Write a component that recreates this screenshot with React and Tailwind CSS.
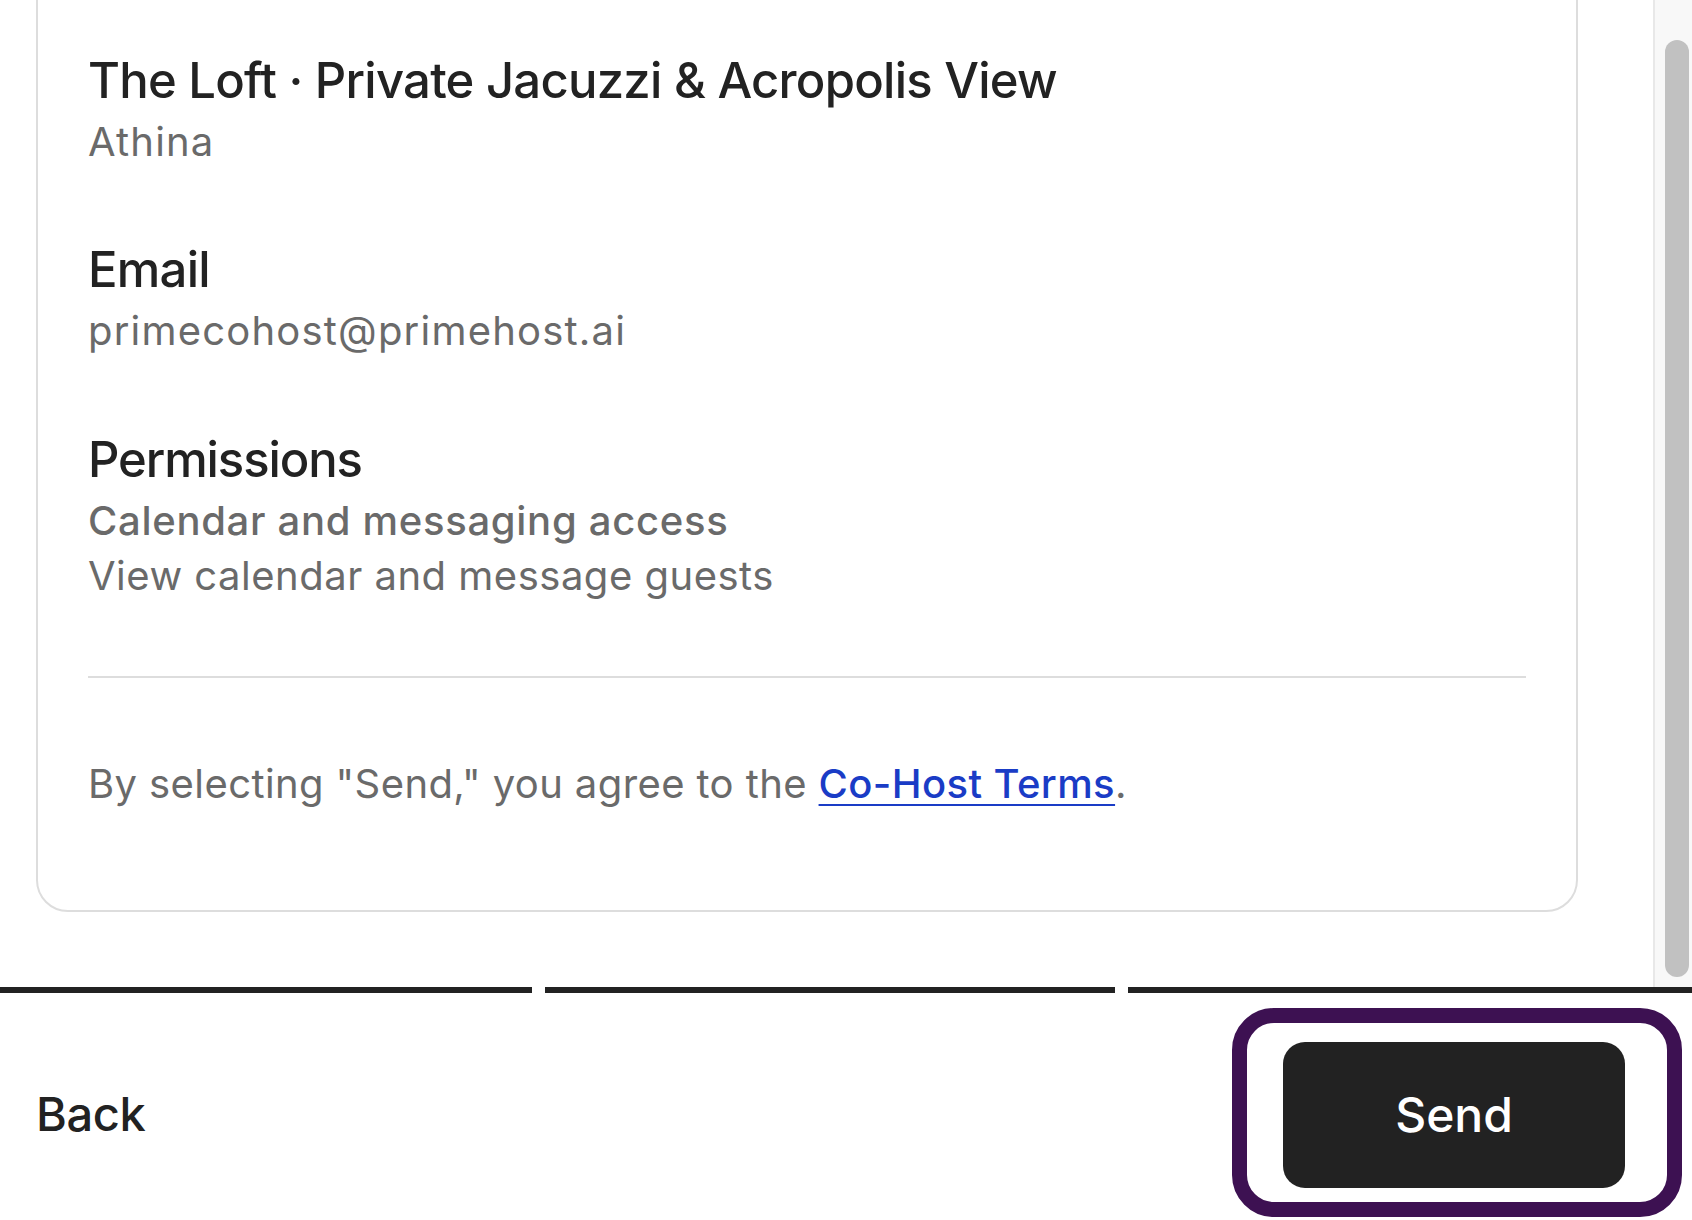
import React from "react";

export default function App() {
  return (
    <div className="w-[1692px] h-[1220px] overflow-hidden bg-white flex flex-col font-[Inter,sans-serif] text-[#222222]">
      {/* Scrollable region */}
      <div className="h-[987px] flex flex-row overflow-hidden">
        <div className="flex-1 pl-[36px] pr-[75px]">
          <div className="mt-[-60px] border-2 border-[#dddddd] rounded-[32px] pt-[110px] pb-[99px] px-[50px]">
            <div className="text-[49px] leading-[58px] font-medium tracking-[-0.75px]">
              The Loft · Private Jacuzzi &amp; Acropolis View
            </div>
            <div className="mt-[3px] text-[40px] leading-[58px] tracking-[1.2px] text-[#6a6a6a]">Athina</div>

            <div className="mt-[70px] text-[49px] leading-[58px] font-medium tracking-[-0.75px]">Email</div>
            <div className="mt-[3px] text-[40px] leading-[58px] tracking-[1.2px] text-[#6a6a6a]">
              primecohost@primehost.ai
            </div>

            <div className="mt-[71px] text-[49px] leading-[58px] font-medium tracking-[-1.1px]">Permissions</div>
            <div className="mt-[4px] text-[40px] leading-[55px] font-medium tracking-[0.7px] text-[#6a6a6a]">
              Calendar and messaging access
            </div>
            <div className="text-[40px] leading-[55px] tracking-[0.5px] text-[#6a6a6a]">
              View calendar and message guests
            </div>

            <div className="mt-[73px] h-[2px] bg-[#dddddd]" />

            <div className="mt-[78px] text-[40px] leading-[55px] tracking-[0.4px] text-[#6a6a6a]">
              By selecting "Send," you agree to the{" "}
              <a className="text-[#1a3cc6] font-medium underline decoration-[2px] underline-offset-[6px]">
                Co-Host Terms
              </a>
              .
            </div>
          </div>
        </div>
        {/* Scrollbar */}
        <div className="w-[39px] h-full bg-[#f8f8f8] border-l-2 border-[#e8e8e8] pl-[10px] pr-[3px] pt-[40px] pb-[10px]">
          <div className="w-[24px] h-full rounded-full bg-[#c1c1c1]" />
        </div>
      </div>

      {/* Progress bars */}
      <div className="h-[6px] flex flex-row gap-[13px]">
        <div className="w-[532px] h-full bg-[#222222]" />
        <div className="w-[570px] h-full bg-[#222222]" />
        <div className="flex-1 h-full bg-[#222222]" />
      </div>

      {/* Footer */}
      <div className="flex-1 flex flex-row justify-between items-start pl-[36px] pr-[10px]">
        <button className="mt-[92px] text-[47px] leading-[58px] font-medium tracking-[-0.4px] text-[#222222]">Back</button>
        <div className="mt-[15px] border-[15px] border-[#3d1152] rounded-[42px] pl-[36px] pr-[42px] pt-[19px] pb-[14px]">
          <button className="w-[342px] h-[146px] rounded-[22px] bg-[#222222] text-white text-[48px] font-medium flex items-center justify-center">
            Send
          </button>
        </div>
      </div>
    </div>
  );
}
